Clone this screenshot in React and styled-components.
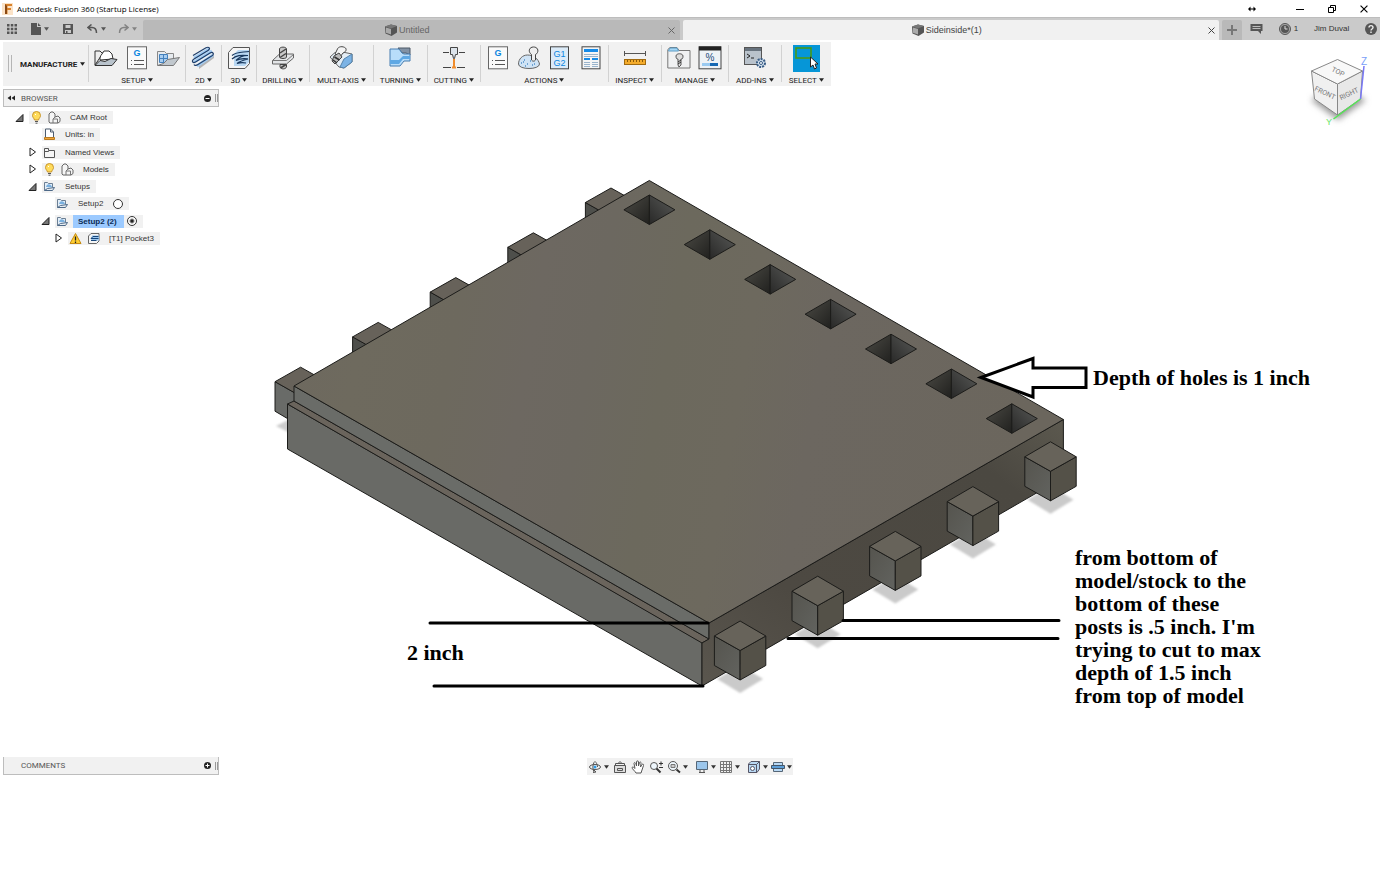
import React, { useState } from 'react'
import styled, { createGlobalStyle } from 'styled-components'

const GlobalStyle = createGlobalStyle`
    * {
        box-sizing: border-box;
    }
    body {
        margin: 0;
        background: #fff;
        color: #333;
        font-family: "Liberation Sans", Arial, sans-serif;
        font-size: 8px;
    }
    button {
        display: inline-flex;
        align-items: center;
        justify-content: center;
        margin: 0;
        padding: 0;
        border: none;
        background: none;
        color: inherit;
        font: inherit;
        cursor: pointer;
    }
    svg {
        display: block;
        flex: none;
    }
`
const Page = styled.div`
    display: flex;
    flex-direction: column;
    min-height: 100vh;
    overflow: hidden;
`
const TitleBar = styled.header`
    display: flex;
    align-items: center;
    height: 17px;
    padding: 0 9px 0 2px;
    gap: 4px;
`
const AppTitle = styled.h1`
    flex: 1;
    margin: 0;
    font-family: "Open Sans", "Noto Sans", sans-serif;
    font-size: 8px;
    font-weight: 400;
    color: #000;
`
const WindowButtons = styled.div`
    display: flex;
    align-items: center;
    gap: 18px;
    color: #000;
`
const WindowButton = styled.button`
    width: 14px;
    height: 14px;
    margin-right: ${props => props.$apart ? '16px' : '0'};
`
const TabBar = styled.nav`
    display: flex;
    align-items: stretch;
    height: 23px;
    padding-top: 2px;
    background: #cacaca;
    border-top: 1px solid #bdbdbd;
    color: #555;
`
const QuickTools = styled.div`
    display: flex;
    align-items: center;
    width: 143px;
    height: 17px;
    padding-left: 5px;
    gap: 12px;
`
const QuickButton = styled.button`
    gap: 3px;
    min-width: 14px;
    height: 16px;
    opacity: ${props => props.$faded ? 0.6 : 1};
`
const Tabs = styled.div`
    display: flex;
    flex: 1;
    gap: 3px;
`
const Tab = styled.div`
    display: flex;
    flex: 1;
    align-items: center;
    padding: 0 2px 0 6px;
    border-radius: 2px 2px 0 0;
    background: ${props => props.$active ? '#f1f1f1' : '#b9b9b9'};
    color: ${props => props.$active ? '#444' : '#666'};
`
const TabName = styled.button`
    flex: 1;
    gap: 2px;
    font-size: 9px;
`
const TabClose = styled.button`
    width: 12px;
    height: 12px;
`
const AddTab = styled.button`
    width: 20px;
    margin-left: 3px;
    border-radius: 2px 2px 0 0;
    background: #b9b9b9;
    color: #777;
`
const UserTools = styled.div`
    display: flex;
    align-items: center;
    justify-content: space-between;
    width: 138px;
    height: 17px;
    padding: 0 3px 0 8px;
`
const UserButton = styled.button`
    gap: 3px;
    color: ${props => props.$text ? '#333' : '#555'};
`
const Workspace = styled.main`
    position: relative;
    display: flex;
    flex-direction: column;
    padding: 2px 3px 0;
`
const Ribbon = styled.div`
    display: flex;
    align-self: flex-start;
    height: 44px;
    background: #f1f1f1;
`
const Grip = styled.div`
    width: 4px;
    height: 17px;
    margin: 13px 8px 0 5px;
    border: solid #b5b5b5;
    border-width: 0 1px;
`
const WorkspaceButton = styled.button`
    gap: 3px;
    padding-right: 3px;
    color: #222;
    font-family: Roboto, sans-serif;
    font-size: 8px;
    font-weight: 700;
`
const Group = styled.div`
    display: flex;
    flex-direction: column;
    align-items: center;
    width: ${props => props.$width}px;
    padding-top: 2px;
    position: relative;
    &::before {
        content: '';
        position: absolute;
        left: 0;
        top: 3px;
        bottom: 4px;
        width: 1px;
        background: #d2d2d2;
    }
`
const GroupIcons = styled.div`
    display: flex;
    align-items: center;
    height: 28px;
    gap: 7px;
`
const GroupLabel = styled.button`
    gap: 2px;
    height: 12px;
    margin-top: 2px;
    font-family: Roboto, sans-serif;
    font-size: 8px;
    color: #222;
`
const ToolButton = styled.button`
    width: ${props => props.$selected ? 27 : 24}px;
    height: ${props => props.$selected ? 27 : 24}px;
    background: ${props => props.$selected ? '#0696d7' : 'none'};
`
const ViewCube = styled.div`
    position: absolute;
    top: 14px;
    right: 8px;
`
const Body = styled.div`
    display: grid;
    grid-template-columns: 216px 1fr;
    margin-top: 3px;
`
const Sidebar = styled.aside`
    display: flex;
    flex-direction: column;
`
const PanelBar = styled.div`
    display: flex;
    align-items: center;
    height: 18px;
    padding-left: 3px;
    background: #f1f1f1;
    border: solid #bdbdbd;
    border-width: ${props => props.$bottom ? '0 1px 1px' : '1px'};
`
const PanelTitle = styled.h2`
    flex: 1;
    margin: 0 0 0 5px;
    padding-left: ${props => props.$bottom ? '9px' : '0'};
    color: #555;
    font-family: Roboto, sans-serif;
    font-size: 8px;
    font-weight: 400;
`
const PanelGrip = styled.span`
    width: 3px;
    height: 8px;
    margin-left: 4px;
    border: solid #999;
    border-width: 0 1px;
`
const Tree = styled.ul`
    display: grid;
    grid-template-rows: repeat(8, 1fr);
    align-items: center;
    height: 138px;
    margin: 2px 0 0;
    padding: 0;
    list-style: none;
`
const TreeRow = styled.li`
    display: flex;
    align-items: center;
    padding-left: ${props => 10 + props.$depth * 13}px;
`
const Toggle = styled.button`
    width: 12px;
    height: 12px;
    margin-right: 4px;
`
const ToggleSpace = styled.span`
    width: 16px;
`
const RowBox = styled.label`
    display: flex;
    align-items: center;
    height: 13px;
    padding-right: 6px;
    gap: 3px;
    background: #f1f1f1;
`
const RowIcon = styled.span`
    display: flex;
    justify-content: center;
    width: 15px;
`
const RowName = styled.span`
    height: 13px;
    padding: 0 ${props => props.$picker ? '7px' : '0'} 0 5px;
    background: ${props => props.$current ? '#9ccaff' : 'none'};
    color: ${props => props.$current ? '#0c2c55' : '#333'};
    font-weight: ${props => props.$current ? 700 : 400};
    line-height: 13px;
`
const Radio = styled.input`
    appearance: none;
    width: 10px;
    height: 10px;
    margin: 0;
    border: 1px solid #333;
    border-radius: 50%;
    background: #fff;
    &:checked {
        background: radial-gradient(circle, #222 0 1px, #fff 3px);
    }
`
const Scene = styled.section`
    position: relative;
    overflow: hidden;
`
const Note = styled.p`
    position: absolute;
    left: ${props => props.$x}px;
    top: ${props => props.$y}px;
    margin: 0;
    color: #000;
    font-family: "Liberation Serif", "Times New Roman", serif;
    font-size: 22px;
    font-weight: 700;
    line-height: 23px;
    white-space: nowrap;
`
const Footer = styled.footer`
    display: grid;
    grid-template-columns: 216px 1fr 216px;
    align-items: start;
`
const ViewBar = styled.div`
    display: flex;
    align-items: center;
    justify-self: center;
    height: 17px;
    margin-top: 1px;
    gap: 7px;
    padding: 0 1px;
    background: #f1f1f1;
`
const ViewGroup = styled.div`
    display: flex;
    gap: ${props => props.$tight ? 3 : 4}px;
`
const ViewButton = styled.button`
    gap: 2px;
`

const Caret = ({ size = 5 }) => (
    <svg width={size} height={size - 1} viewBox="0 0 5 4"><path d="M0 .3h5L2.5 3.8z" fill="currentColor" /></svg>
)

const Icon = ({ size = 24, box = 24, children }) => (
    <svg width={size} height={size} viewBox={`0 0 ${box} ${box}`} fill="none" stroke="#333" strokeWidth="1">{children}</svg>
)

const Close = ({ size = 7 }) => (
    <svg width={size} height={size} viewBox="0 0 7 7" stroke="currentColor"><path d="M.5.5l6 6M6.5.5l-6 6" /></svg>
)

const CubeIcon = () => (
    <svg width="12" height="12" viewBox="0 0 12 12">
        <path d="M0 2.500L6 .5l6 1.500v6.500L6.500 12 .5 9.500z" fill="#555" />
        <path d="M1 3.500l5 1.500v5.500L1 8.800z" fill="#aaa" />
        <path d="M0 2.500L6 .5l6 1.500-6 2.500z" fill="#777" />
    </svg>
)

const GSheet = () => (
    <Icon>
        <rect x="2.500" y=".8" width="19" height="22" fill="#fafafa" stroke="#666" />
        <text x="12" y="10" textAnchor="middle" fill="#0b86e0" stroke="none" fontSize="9" fontWeight="700">G</text>
        <path d="M6 14.500h1m2 0h10M6 18.500h1m2 0h10" stroke="#555" />
    </Icon>
)

const toolIcons = {
    setup: (
        <Icon>
            <path d="M1 19V5h5l2 2h3v3H7z" fill="#eee" />
            <path d="M6 14c0-2 0-4 2-6l2-3h5l3 3 1 5z" fill="#fff" />
            <path d="M1 19.500l5-5 5 1 6-3 6 1-5 6z" fill="#b9c3cc" />
        </Icon>
    ),
    g: <GSheet />,
    folderGrid: (
        <Icon>
            <path d="M1.500 19V5.500h7l2 2h7V13" fill="#e6eaee" stroke="#888" />
            <path d="M3.500 8.500h8v8h-8zM3.500 12.500h8M7.500 8.500v8" fill="#a8cdf0" stroke="#4380bd" />
            <path d="M1.500 19.500l6-2 4-4 12-2-6 8z" fill="#c1c8ce" stroke="#777" />
        </Icon>
    ),
    pass2d: (
        <Icon>
            <path d="M8 23L23 12v-3L8 19z" fill="#b5b5b5" stroke="none" />
            <path d="M3 12L18 3M3 16L21 5M6 20L22 9" stroke="#a4cdf3" strokeWidth="3" />
            <path d="M2 9.500L15 1.800c3-1.500 5 .8 2 2.700L3 13c-3 2-1 4.500 1.500 3L19 7c3-1.500 4.500 1 2 2.700L7 18.500c-2 1.500-3.500 1-4 0" stroke="#1f3f6b" strokeWidth="1.200" />
        </Icon>
    ),
    pass3d: (
        <Icon>
            <path d="M1.500 6.500L6 1.500h16.500v16l-4.500 5H1.500z" fill="#f5f5f5" stroke="#555" />
            <path d="M7 8l4-4h11v12l-4 4H7z" fill="#b9d8f3" stroke="none" />
            <path d="M5 9.500c5-4 9-3 17-4M5 13c4-4 9-4 16-3.500-5 0-9 1.500-12 5 5-2.500 8-2 12-1.500-4 1-8 2-11 4.500 3-1 6-1 9-.5" stroke="#16365c" strokeWidth="1.200" />
        </Icon>
    ),
    drill: (
        <Icon>
            <path d="M1.500 14.500l7-6.500h14v4l-7 6h-14z" fill="#e3e5e7" stroke="#666" />
            <path d="M1.500 14.500h14l7-6" stroke="#777" />
            <path d="M8.500 3c0-2.500 7-2.500 7 0v8c0 2-7 2-7 0zM9 18.500h6.500V21c-1 2.500-5.500 2.500-6.500 0z" fill="#c8c8c8" stroke="#444" />
            <path d="M9 7l6-4M9 11.500l6-4M9.500 22l5.500-3.500" stroke="#444" strokeWidth="1.500" />
        </Icon>
    ),
    multi: (
        <Icon>
            <path d="M1 11l5-4.500h10l7 1.500v8l-8 6-5-1z" fill="#e4edf5" stroke="#666" />
            <path d="M11 21l4-8 8-5v8l-8 6z" fill="#7cb3e5" stroke="#5583ab" />
            <path d="M8 4c1-4 6-4 8.500-2 1.500 2 0 4-2.500 5l-3 4-5-3z" fill="#f4f4f4" stroke="#444" />
            <path d="M5 10l5-3 3 4-7 7-3-3z" fill="#bbb" stroke="#444" />
            <path d="M5.500 11l5 3M4 14l4 3" stroke="#333" strokeWidth="1.500" />
        </Icon>
    ),
    turning: (
        <Icon>
            <path d="M10 2h12v7l-4-2h-4z" fill="#8292a5" stroke="#4c5967" />
            <path d="M2 3h9l3 4 2 1h6v7h-6l-4 5H2z" fill="#b8ddfa" stroke="#477db0" />
            <path d="M2 14h9l4-4h7v3h-7l-4 5H2z" fill="#5fa8e4" stroke="none" />
        </Icon>
    ),
    cutting: (
        <Icon>
            <path d="M1 6.500h6m10 0h6M1 21.500h8m6 0h8" stroke="#444" />
            <path d="M8.500 1.500h7v7h-2l-1 4h-1l-1-4h-2z" fill="#dce3ea" stroke="#444" />
            <path d="M12 13v8M10 21.500h4" stroke="#ef8c2c" strokeWidth="2" />
        </Icon>
    ),
    simulate: (
        <Icon>
            <path d="M1.500 18c0-5 4-9 9-9 6 0 11 4 12 9 0 6-21 6-21 0z" fill="#cfe3f5" stroke="#666" />
            <path d="M4 17h1m2-3h1m2 4h1m2-3h1m1 4h1m-8 1h1m-3-4h1m10 2h1" stroke="#4f8fc8" strokeWidth="1.500" />
            <path d="M14.500 14V8.500C11 6 12 2 15 1.200c4-1 7 1.800 5.500 5.300-.5 1-1 1.500-2 2V14c-1 1.500-3 1.500-4 0z" fill="#eee" stroke="#444" />
        </Icon>
    ),
    g1g2: (
        <Icon>
            <rect x="2.500" y=".8" width="18" height="22" fill="#dcebf8" stroke="#444" />
            <text x="11.500" y="10.500" textAnchor="middle" fill="#0b86e0" stroke="none" fontSize="9">G1</text>
            <text x="11.500" y="20" textAnchor="middle" fill="#0b86e0" stroke="none" fontSize="9">G2</text>
        </Icon>
    ),
    sheet: (
        <Icon>
            <rect x="3" y=".8" width="18" height="22" fill="#f5f5f5" stroke="#444" />
            <path d="M5 3h14v3H5zM5 12h6v2H5zm8 0h6v2h-6z" fill="#168be8" stroke="none" />
            <path d="M5 8.500h14M5 10.500h14M5 16.500h6m2 0h6M5 18.500h6m2 0h6M5 20.500h6m2 0h6" stroke="#9ab4cc" />
        </Icon>
    ),
    inspect: (
        <Icon>
            <path d="M2 7.500h20M1.500 5v5M22.500 5v5" stroke="#555" />
            <rect x="1.500" y="13.500" width="21" height="5" fill="#f4ac2c" stroke="#a06a10" />
            <path d="M4.500 14v2m3-2v2m3-2v2m3-2v2m3-2v2m3-2v2" stroke="#8b5a08" />
        </Icon>
    ),
    library: (
        <Icon>
            <path d="M.8 22V3.500L3 1.500h7l2 3h11V22z" fill="#f0f1f2" stroke="#777" />
            <path d="M1.500 4.500L3 2h7l1.500 3H1.500z" fill="#a7d7f5" stroke="#5d9cc4" />
            <path d="M9 10c0-3 7-3 7 0s-1 3-2 3v6l-2 2-1-2v-6c-1 0-2 0-2-3z" fill="#ddd" stroke="#555" />
            <path d="M11 16l3-2m-3 4l3-2" />
        </Icon>
    ),
    percent: (
        <Icon>
            <rect x="1" y=".8" width="22" height="22" fill="#eef2f6" stroke="#444" />
            <path d="M1 .5h22v4H1z" fill="#222" stroke="none" />
            <text x="12" y="15" textAnchor="middle" fill="#234a78" stroke="none" fontSize="10">%</text>
            <path d="M4 17h8v3H4z" fill="#9acaf1" stroke="none" />
            <path d="M12 17h8v3h-8z" fill="#1668b3" stroke="none" />
        </Icon>
    ),
    addins: (
        <Icon>
            <rect x="1.500" y="1.500" width="17" height="17" fill="#b9c2cb" stroke="#555" />
            <path d="M2 2h16v3H2z" fill="#68737e" stroke="none" />
            <path d="M4 8l3 2-3 2m4 0h3" stroke="#222" />
            <circle cx="18" cy="17" r="4" fill="#cfdeec" stroke="#385c85" strokeWidth="2" strokeDasharray="2 1" />
            <circle cx="18" cy="17" r="1.500" fill="#fff" stroke="#385c85" />
        </Icon>
    ),
    select: (
        <Icon size={27} box={27}>
            <rect x="3" y="3" width="15" height="10" stroke="#4c9a0b" strokeWidth="1.500" />
            <path d="M17.500 12v10l2.500-2 1.500 4 2-1-1.500-4h3z" fill="#fff" stroke="#222" />
        </Icon>
    ),
}

const groups = [
    { name: 'SETUP', width: 97, tools: ['setup', 'g', 'folderGrid'] },
    { name: '2D', width: 36, tools: ['pass2d'] },
    { name: '3D', width: 35, tools: ['pass3d'] },
    { name: 'DRILLING', width: 53, tools: ['drill'] },
    { name: 'MULTI-AXIS', width: 64, tools: ['multi'] },
    { name: 'TURNING', width: 54, tools: ['turning'] },
    { name: 'CUTTING', width: 53, tools: ['cutting'] },
    { name: 'ACTIONS', width: 128, tools: ['g', 'simulate', 'g1g2', 'sheet'] },
    { name: 'INSPECT', width: 53, tools: ['inspect'] },
    { name: 'MANAGE', width: 67, tools: ['library', 'percent'] },
    { name: 'ADD-INS', width: 53, tools: ['addins'] },
    { name: 'SELECT', width: 50, tools: ['select'] },
]

const rowIcons = {
    bulb: (
        <Icon size={13} box={13}>
            <path d="M4.500 9C4 7 2.500 6.500 2.500 4.500a4 4 0 018 0C10.500 6.500 9 7 8.500 9z" fill="#ffdc5c" stroke="#c9952a" />
            <path d="M5 10.500h3M5.500 12.200h2" stroke="#555" />
            <path d="M5 4l1-1" stroke="#fff" />
        </Icon>
    ),
    body: (
        <Icon size={13} box={13}>
            <path d="M1 11V3l2-2h2l2 2v3l3-1 2 2v3.500L10 12H2z" fill="#f5f5f5" stroke="#666" />
            <path d="M5 12V8l2-2M5 8h4.500v4" stroke="#777" />
        </Icon>
    ),
    units: (
        <Icon size={13} box={13}>
            <path d="M2.500 9V1h5l3 3v5" fill="#fff" stroke="#4c5c70" />
            <path d="M7.500 1v3h3" stroke="#4c5c70" />
            <path d="M1.500 9.500h10v2h-10z" fill="#f0a63a" stroke="#b97a20" />
        </Icon>
    ),
    views: (
        <Icon size={13} box={13}>
            <path d="M1.500 11.500v-9h4v2h6v7zM1.500 5.500h4l1-1" fill="#f5f5f5" stroke="#555" />
        </Icon>
    ),
    folder: (
        <Icon size={13} box={13}>
            <path d="M1.500 10.500v-8h3l1 1h4v4" fill="#e3eef8" stroke="#6b7f94" />
            <path d="M3 7c1-4 5-3 6 0" fill="#79b0e0" stroke="none" />
            <path d="M1.500 10.500l3-2 7-1-2 3z" fill="#e7edf2" stroke="#4d6988" />
        </Icon>
    ),
    warning: (
        <Icon size={13} box={13}>
            <path d="M6.500 1.500l5.500 10H1z" fill="#ffce31" stroke="#c68b12" strokeLinejoin="round" />
            <path d="M6.500 4.500v4m0 1v1.500" stroke="#222" strokeWidth="1.300" />
        </Icon>
    ),
    pocket: (
        <Icon size={13} box={13}>
            <path d="M1.500 4l2.500-2.500h8V9l-2.500 2.500h-8z" fill="#f5f5f5" stroke="#666" />
            <path d="M5 3.500h7v5H4z" fill="#9ac6ee" stroke="none" />
            <path d="M11.500 4.500H6L4 6.500h7.500M9.500 8.500H4" stroke="#17467b" />
        </Icon>
    ),
}

const rows = [
    { name: 'CAM Root', depth: 0, toggle: 'open', icons: ['bulb', 'body'] },
    { name: 'Units: in', depth: 1, icons: ['units'] },
    { name: 'Named Views', depth: 1, toggle: 'closed', icons: ['views'] },
    { name: 'Models', depth: 1, toggle: 'closed', icons: ['bulb', 'body'] },
    { name: 'Setups', depth: 1, toggle: 'open', icons: ['folder'] },
    { name: 'Setup2', depth: 2, icons: ['folder'], radio: true },
    { name: 'Setup2 (2)', depth: 2, toggle: 'open', icons: ['folder'], radio: true },
    { name: '[T1] Pocket3', depth: 3, toggle: 'closed', icons: ['warning', 'pocket'] },
]

const Browser = () => {
    const [current, setCurrent] = useState('Setup2 (2)')
    return (
        <Sidebar>
            <PanelBar>
                <button aria-label="Collapse browser">
                    <svg width="9" height="6" viewBox="0 0 9 6"><path d="M4 .5v5L.5 3zM8 .5v5L4.500 3z" fill="#222" /></svg>
                </button>
                <PanelTitle>BROWSER</PanelTitle>
                <button aria-label="Hide browser">
                    <svg width="7" height="7" viewBox="0 0 7 7"><circle cx="3.500" cy="3.500" r="3.500" fill="#222" /><path d="M1.500 3.500h4" stroke="#fff" /></svg>
                </button>
                <PanelGrip />
            </PanelBar>
            <Tree>
                {rows.map(row => (
                    <TreeRow key={row.name} $depth={row.depth}>
                        {row.toggle ?
                        <Toggle aria-label={`Toggle ${row.name}`}>
                            <svg width="9" height="10" viewBox="0 0 9 10">
                                {row.toggle === 'open' ?
                                <path d="M8 1.500v7H1z" fill="#777" stroke="#222" /> :
                                <path d="M2 1l5.500 4L2 9z" fill="#fff" stroke="#222" />}
                            </svg>
                        </Toggle> :
                        <ToggleSpace />}
                        <RowBox>
                            {row.icons.map(icon => <RowIcon key={icon}>{rowIcons[icon]}</RowIcon>)}
                            <RowName $picker={row.radio} $current={row.name === current}>{row.name}</RowName>
                            {row.radio && <Radio type="radio" name="setup" checked={row.name === current} onChange={() => setCurrent(row.name)} />}
                        </RowBox>
                    </TreeRow>
                ))}
            </Tree>
        </Sidebar>
    )
}

const backPosts = [0, 1, 2, 3, 4].map(i => [611 - i * 77.6, 188 + i * 44.8])
const frontPosts = [0, 1, 2, 3, 4].map(i => [1050.5 - i * 77.6, 441.8 + i * 44.8])
const holes = [0, 1, 2, 3, 4, 5, 6].map(i => [649.4 + i * 60.4, 195 + i * 34.8])

const Model = () => (
    <svg width="1158" height="668" viewBox="219 89 1158 668" strokeLinejoin="round">
        <defs>
            <linearGradient id="top" x1="0" y1="0" x2="1" y2="0.1">
                <stop offset="0" stopColor="#6d685f" />
                <stop offset="0.12" stopColor="#6e6a5e" />
                <stop offset="0.24" stopColor="#6d695e" />
                <stop offset="0.34" stopColor="#6d6861" />
                <stop offset="0.42" stopColor="#6c6860" />
                <stop offset="0.52" stopColor="#6c695d" />
                <stop offset="0.62" stopColor="#6d695e" />
                <stop offset="0.72" stopColor="#6c6760" />
                <stop offset="1" stopColor="#6b665d" />
            </linearGradient>
            <linearGradient id="right" x1="0" y1="1" x2="1" y2="0">
                <stop offset="0" stopColor="#5a564e" />
                <stop offset="0.3" stopColor="#4d4942" />
                <stop offset="0.8" stopColor="#4b4841" />
                <stop offset="1" stopColor="#5c594f" />
            </linearGradient>
            <linearGradient id="postLeft" x1="0" y1="0" x2="1" y2="1">
                <stop offset="0" stopColor="#55544e" />
                <stop offset="1" stopColor="#62635f" />
            </linearGradient>
            <linearGradient id="holeLeft" x1="0" y1="0" x2="1" y2="1">
                <stop offset="0" stopColor="#4c4b45" />
                <stop offset="1" stopColor="#20201e" />
            </linearGradient>
            <linearGradient id="holeRight" x1="1" y1="0" x2="0" y2="1">
                <stop offset="0" stopColor="#5a5b59" />
                <stop offset="1" stopColor="#282827" />
            </linearGradient>
            <filter id="soft" x="-30%" y="-30%" width="160%" height="160%"><feGaussianBlur stdDeviation="1.200" /></filter>
        </defs>
        <path d="M276 426l14-7v14z" fill="#ccc" filter="url(#soft)" />
        {frontPosts.map(([x, y]) => (
            <path key={x} d={`M${x - 23} ${y + 58}l23-14 23 14-23 14z`} fill="#cacaca" filter="url(#soft)" />
        ))}
        <g stroke="#1c1c1a">
            {backPosts.map(([x, y]) => (
                <g key={x}>
                    <path d={`M${x - 25.6} ${y + 14.5}v29.500l19.500 11.500v-30z`} fill={y > 360 ? '#696b68' : '#4e4f4b'} />
                    <path d={`M${x} ${y}l25 14-25 15-25.600-14.500z`} fill="#67625a" />
                </g>
            ))}
            <path d="M287.500 404L702 642.500V686L287.500 449z" fill="#696a66" />
            <path d="M294 401l415 238-7 4L287.500 404z" fill="#6a645c" />
            <path d="M294 386l415 237v16L294 401z" fill="#6a6c68" />
            <path d="M709 623l354.400-203.500v58L702 686v-43l7-4z" fill="url(#right)" />
            <path d="M649.300 180.500L1063.400 419.500 709 623 294 386z" fill="url(#top)" />
            {holes.map(([x, y]) => (
                <g key={x}>
                    <path d={`M${x} ${y}v29.500l-25.500-14.700z`} fill="url(#holeLeft)" />
                    <path d={`M${x} ${y}v29.500l25.500-14.700z`} fill="url(#holeRight)" />
                </g>
            ))}
            {frontPosts.map(([x, y]) => (
                <g key={x}>
                    <path d={`M${x - 25.7} ${y + 15}v29.500l25.700 14.500v-29.500z`} fill="url(#postLeft)" />
                    <path d={`M${x + 25.7} ${y + 15}v29.500l-25.700 14.500v-29.500z`} fill="#545148" />
                    <path d={`M${x} ${y}l25.700 15-25.700 14.500-25.700-14.500z`} fill="#67635a" />
                </g>
            ))}
        </g>
        <g stroke="#000" strokeWidth="3" strokeLinecap="round">
            <path d="M430 623h278M434 686h269M843 620.500h216M788 638.500h270" />
            <path d="M981 377.500l52-19V368h53v19.500h-53v9.500z" fill="#fff" strokeLinejoin="miter" />
        </g>
    </svg>
)

const Cube = () => (
    <svg width="66" height="76" viewBox="1306 54 66 76">
        <defs>
            <filter id="cubeShadow" x="-30%" y="-30%" width="160%" height="160%"><feGaussianBlur stdDeviation="3" /></filter>
        </defs>
        <path d="M1311 100l26-15 29 15-28 20z" fill="#999" filter="url(#cubeShadow)" />
        <g stroke="#888">
            <path d="M1311.500 71l26 13v31l-23-16z" fill="#f0f0f0" />
            <path d="M1362.500 71l-25 13v31l23-16z" fill="#e8e8e8" />
            <path d="M1337.500 59.500l25 11.500-25 13-26-13z" fill="#f8f8f8" />
        </g>
        <g fill="#777" fontFamily="Roboto, sans-serif" fontSize="7" textAnchor="middle">
            <text transform="translate(1337 74) rotate(26)">TOP</text>
            <text transform="translate(1324 95) rotate(25)">FRONT</text>
            <text transform="translate(1350 96) rotate(-25)">RIGHT</text>
        </g>
        <path d="M1364 66l-3.500 33" stroke="#7878f5" strokeWidth="1.500" />
        <path d="M1360.500 99l-27 20" stroke="#55e655" strokeWidth="1.500" />
        <text x="1361" y="65" fontSize="10" fill="#7aa0f8">Z</text>
        <text x="1326" y="125" fontSize="9" fill="#6be66b">Y</text>
    </svg>
)

const viewIcons = {
    Orbit: (
        <Icon size={14} box={14}>
            <ellipse cx="7" cy="7" rx="5.500" ry="2.500" stroke="#555" />
            <path d="M6 12C4.500 9 4.500 5 6 2.500l1-1 1 1C9 4 9.500 5.500 9.500 7M5 12.500l3-.5-2-2" stroke="#555" />
            <circle cx="7" cy="7" r="1.500" fill="#2d9be8" stroke="none" />
        </Icon>
    ),
    'Look at': (
        <Icon size={14} box={14}>
            <path d="M1.500 5.500h11v7h-11zM4.500 8.500h5v2h-5z" fill="#ddd" stroke="#555" />
            <path d="M2.500 5.500v-2h9v2M5 3.500l2-2 2 2" stroke="#555" />
        </Icon>
    ),
    Pan: (
        <Icon size={14} box={14}>
            <path d="M5 13C4 11 1 9 1 7.500c1-1 2 0 3 1L3 3.500c0-1.500 1.500-1 2 .5l.5 2V2c0-1.500 2-1.500 2 0v4l1-3.500c.5-1 2-.5 1.500 1L9.500 7l1.500-2.500c1-1 2 0 1.500 1L11 10l-1 3z" fill="#fff" stroke="#555" />
        </Icon>
    ),
    Zoom: (
        <Icon size={14} box={14}>
            <circle cx="5" cy="6" r="3.500" fill="#eef6fc" stroke="#555" />
            <path d="M7.500 8.500l4 4" strokeWidth="2" />
            <path d="M10 3.500h4m-2-2v4M10 7.500h4" />
        </Icon>
    ),
    Fit: (
        <Icon size={14} box={14}>
            <circle cx="6" cy="6" r="4.500" fill="#eef6fc" stroke="#555" />
            <path d="M4 4.500h4v3H4z" fill="#ccc" stroke="#777" />
            <path d="M9.500 9.500l3.500 3" strokeWidth="2" />
        </Icon>
    ),
    'Display settings': (
        <Icon size={14} box={14}>
            <path d="M1.500 1.500h11v8h-11z" fill="#9bc6ec" stroke="#556677" />
            <path d="M5 10v2m4-2v2M4 12.500h6" stroke="#555" />
        </Icon>
    ),
    Grid: (
        <Icon size={14} box={14}>
            <path d="M1.500 1.500h11v11h-11zM4.500 1.500v11m3-11v11m3-11v11m-9-8h11m-11 3h11m-11 3h11" stroke="#777" />
        </Icon>
    ),
    Viewports: (
        <Icon size={14} box={14}>
            <path d="M1.500 4l2.500-2.500h8.500V9L10 12.500H1.500z" fill="#b9d8f3" stroke="#556" />
            <path d="M1.500 4.500h8v8M9.500 4.500l3-3" stroke="#556" />
            <circle cx="5.500" cy="8.500" r="2" fill="#fff" stroke="#556" />
        </Icon>
    ),
    Section: (
        <Icon size={14} box={14}>
            <path d="M2.500 2.500h9v9h-9z" fill="#b7d8f4" stroke="#567" />
            <path d="M.5 5.500h13v3H.5z" fill="#5c9ed8" stroke="#456" />
        </Icon>
    ),
}

const viewGroups = [
    [['Orbit', true], ['Look at'], ['Pan'], ['Zoom'], ['Fit', true]],
    [['Display settings', true], ['Grid', true]],
    [['Viewports', true], ['Section', true]],
]

const App = () => (
    <Page>
        <GlobalStyle />
        <TitleBar>
            <svg width="11" height="12" viewBox="0 0 11 12">
                <path d="M0 0h11v12H0z" fill="#fbe3c8" />
                <path d="M3 1h7v2H5.500v2H9v2H5.500v4H3z" fill="#d9822b" />
                <path d="M3 1l2 2v8H3z" fill="#8b4a14" />
            </svg>
            <AppTitle>Autodesk Fusion 360 (Startup License)</AppTitle>
            <WindowButtons>
                <WindowButton aria-label="Resize" $apart>
                    <svg width="8" height="6" viewBox="0 0 8 6"><path d="M0 3l2.500-2.500v2h3v-2L8 3 5.500 5.500v-2h-3v2z" /></svg>
                </WindowButton>
                <WindowButton aria-label="Minimize">
                    <svg width="8" height="8" viewBox="0 0 8 8"><path d="M0 4h8v1H0z" /></svg>
                </WindowButton>
                <WindowButton aria-label="Restore">
                    <svg width="8" height="8" viewBox="0 0 8 8" fill="none" stroke="#000"><path d="M.5 2.500h5v5h-5zM2.500 2V.5h5v5H6" /></svg>
                </WindowButton>
                <WindowButton aria-label="Close"><Close size={8} /></WindowButton>
            </WindowButtons>
        </TitleBar>
        <TabBar>
            <QuickTools>
                <QuickButton aria-label="Data panel">
                    <svg width="10" height="10" viewBox="0 0 10 10" fill="#555">
                        <path d="M0 0h2.500v2.500H0zM3.800 0h2.500v2.500H3.800zM7.500 0H10v2.500H7.500zM0 3.800h2.500v2.500H0zM3.800 3.800h2.500v2.500H3.800zM7.500 3.800H10v2.500H7.500zM0 7.500h2.500V10H0zM3.800 7.500h2.500V10H3.800zM7.500 7.500H10V10H7.500z" />
                    </svg>
                </QuickButton>
                <QuickButton aria-label="File">
                    <svg width="10" height="12" viewBox="0 0 10 12"><path d="M0 0h6v4h4v8H0zM7 0l3 3H7z" fill="#555" /></svg>
                    <Caret />
                </QuickButton>
                <QuickButton aria-label="Save">
                    <svg width="10" height="10" viewBox="0 0 10 10"><path d="M0 0h10v10H0z" fill="#555" /><path d="M2.500 1h5v3h-5zM2 6h6v3H2z" fill="#cacaca" /><path d="M3 7h1.500v2H3z" fill="#555" /></svg>
                </QuickButton>
                <QuickButton aria-label="Undo">
                    <svg width="11" height="10" viewBox="0 0 11 10" fill="none" stroke="#555" strokeWidth="1.500"><path d="M4.500.5l-3.500 3 3.500 3M1 3.500h4c3 0 4.500 2 4.500 5.500" /></svg>
                    <Caret />
                </QuickButton>
                <QuickButton aria-label="Redo" $faded>
                    <svg width="11" height="10" viewBox="0 0 11 10" fill="none" stroke="#555" strokeWidth="1.500"><path d="M6.500.5l3.500 3-3.500 3M10 3.500H6C3 3.500 1.500 5.500 1.500 9" /></svg>
                    <Caret />
                </QuickButton>
            </QuickTools>
            <Tabs>
                <Tab>
                    <TabName><CubeIcon />Untitled</TabName>
                    <TabClose aria-label="Close Untitled"><Close /></TabClose>
                </Tab>
                <Tab $active>
                    <TabName><CubeIcon />Sideinside*(1)</TabName>
                    <TabClose aria-label="Close Sideinside"><Close /></TabClose>
                </Tab>
            </Tabs>
            <AddTab aria-label="New tab">
                <svg width="10" height="10" viewBox="0 0 10 10"><path d="M4 0h2v4h4v2H6v4H4V6H0V4h4z" fill="currentColor" /></svg>
            </AddTab>
            <UserTools>
                <UserButton aria-label="Notifications">
                    <svg width="13" height="10" viewBox="0 0 13 10"><path d="M.5 0h12v7H11v3L8 7H.5z" fill="#555" /><path d="M2.500 2.500h8m-8 2h8" stroke="#bbb" /></svg>
                </UserButton>
                <UserButton $text>
                    <svg width="12" height="12" viewBox="0 0 12 12"><circle cx="6" cy="6" r="5.500" fill="#aaa" stroke="#555" /><circle cx="6" cy="6" r="4" fill="#555" /><path d="M6 3v3h2.500" stroke="#ddd" fill="none" /></svg>
                    1
                </UserButton>
                <UserButton $text>Jim Duval</UserButton>
                <UserButton aria-label="Help">
                    <svg width="12" height="12" viewBox="0 0 12 12"><circle cx="6" cy="6" r="6" fill="#555" /><path d="M4 4.500c0-2.500 4-2.500 4 0C8 6 6 6 6 7.500m0 1V10" stroke="#eee" strokeWidth="1.400" fill="none" /></svg>
                </UserButton>
            </UserTools>
        </TabBar>
        <Workspace>
            <Ribbon>
                <Grip />
                <WorkspaceButton>MANUFACTURE <Caret /></WorkspaceButton>
                {groups.map(group => (
                    <Group key={group.name} $width={group.width}>
                        <GroupIcons>
                            {group.tools.map(tool => (
                                <ToolButton key={tool} aria-label={tool} $selected={tool === 'select'}>{toolIcons[tool]}</ToolButton>
                            ))}
                        </GroupIcons>
                        <GroupLabel>{group.name} <Caret /></GroupLabel>
                    </Group>
                ))}
            </Ribbon>
            <ViewCube><Cube /></ViewCube>
            <Body>
                <Browser />
                <Scene>
                    <Model />
                    <Note $x={874} $y={277}>Depth of holes is 1 inch</Note>
                    <Note $x={188} $y={552}>2 inch</Note>
                    <Note $x={856} $y={457}>
                        from bottom of<br />model/stock to the<br />bottom of these<br />posts is .5 inch. I'm<br />
                        trying to cut to max<br />depth of 1.5 inch<br />from top of model
                    </Note>
                </Scene>
            </Body>
            <Footer>
                <PanelBar $bottom>
                    <PanelTitle $bottom>COMMENTS</PanelTitle>
                    <button aria-label="Show comments">
                        <svg width="7" height="7" viewBox="0 0 7 7"><circle cx="3.500" cy="3.500" r="3.500" fill="#222" /><path d="M1.500 3.500h4m-2-2v4" stroke="#fff" /></svg>
                    </button>
                    <PanelGrip />
                </PanelBar>
                <ViewBar>
                    {viewGroups.map((group, i) => (
                        <ViewGroup key={i} $tight={i > 0}>
                            {group.map(([name, menu]) => (
                                <ViewButton key={name} aria-label={name}>{viewIcons[name]}{menu && <Caret />}</ViewButton>
                            ))}
                        </ViewGroup>
                    ))}
                </ViewBar>
            </Footer>
        </Workspace>
    </Page>
)

export default App
